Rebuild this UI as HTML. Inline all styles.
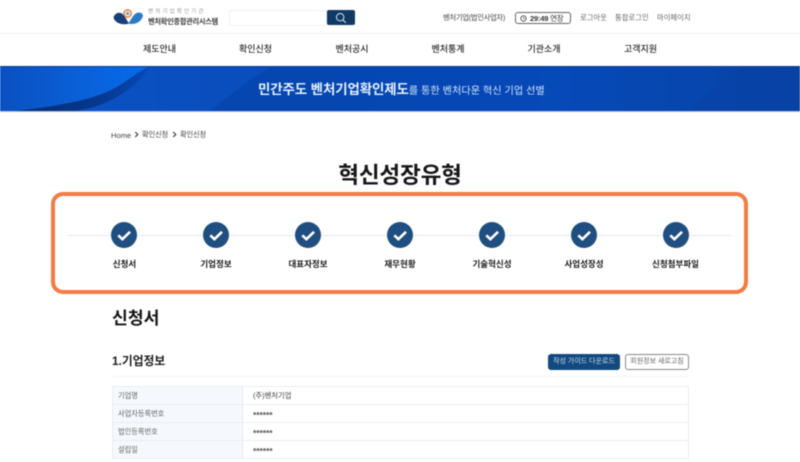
<!DOCTYPE html>
<html lang="ko"><head><meta charset="utf-8"><title>혁신성장유형</title>
<style>
*{box-sizing:border-box;margin:0;padding:0}
html,body{width:800px;height:462px;overflow:hidden;background:#fff}
body{font-family:"Liberation Sans","Noto Sans CJK KR",sans-serif;color:#222;position:relative}
.a{position:absolute;white-space:nowrap;line-height:1}
.c{transform:translateX(-50%)}
#wrap{position:absolute;inset:0;filter:blur(.4px)}
.nav{font-size:9px;font-weight:500;color:#2c2c2c;top:45px}
.top{font-size:7.3px;color:#666;top:14px}
.lab{font-size:8.5px;font-weight:700;color:#1a1a1a;top:260px}
.dot{position:absolute;top:222px;width:26px;height:26px;border-radius:50%;background:#1f4e80}
.dot svg{display:block}
.row{position:absolute;left:112px;width:577px;height:18px;border-bottom:1px solid #ebecf0;border-left:1px solid #ebecf0;border-right:1px solid #ebecf0}
.row i{position:absolute;left:0;top:0;width:130px;height:100%;background:#f5f8fc;border-right:1px solid #e6e9ee}
.row b{position:absolute;left:5px;top:5px;font-weight:400;font-size:7.2px;color:#666;line-height:1;white-space:nowrap}
.row span{position:absolute;left:140px;top:5px;font-size:7.3px;color:#444;line-height:1;white-space:nowrap}
.row span.s{font-size:8.6px;top:6px;font-weight:700;letter-spacing:-.1px;color:#555}
</style></head><body><div id="wrap">

<!-- logo -->
<svg class="a" style="left:112px;top:8px" width="32" height="17" viewBox="0 0 32 17">
<path d="M1.5 9.5C3 5 7 3.5 10.5 6C13 8 14 11 17 15.5C11 17.5 3 15.5 1.5 9.5Z" fill="#16407c"/>
<path d="M31 7.5C30 4 25.5 3.5 22.5 6.5C20 9 19 12 16 15.5C22 17.5 30 14 31 7.5Z" fill="#2a7cc8"/>
<circle cx="15.6" cy="5.5" r="3.6" fill="#fff" stroke="#ee8440" stroke-width="1.7"/>
<circle cx="15.6" cy="5.5" r="1.6" fill="#4aa0dc"/>
</svg>
<div class="a" style="left:148px;top:9.5px;font-size:5.6px;color:#999;letter-spacing:2.05px">벤처기업확인기관</div>
<div class="a" style="left:148px;top:17.5px;font-size:7.2px;font-weight:700;color:#3a3a3a;letter-spacing:-.25px">벤처확인종합관리시스템</div>

<!-- search -->
<div class="a" style="left:229px;top:10px;width:98px;height:16px;border:1px solid #f3f3f5;background:#fff"></div>
<div class="a" style="left:327px;top:10px;width:28px;height:15px;background:#0f3a64;border-radius:2px"></div>
<svg class="a" style="left:335px;top:12px" width="12" height="12" viewBox="0 0 12 12"><circle cx="5.2" cy="5.2" r="3.7" fill="none" stroke="#dfe8f2" stroke-width="1"/><path d="M8 8L10.8 10.8" stroke="#dfe8f2" stroke-width="1"/></svg>

<!-- top right -->
<div class="a top" style="left:443px;color:#444;letter-spacing:-.3px">벤처기업(법인사업자)</div>
<div class="a" style="left:515px;top:12px;width:56px;height:12px;border:1px solid #666;border-radius:3px"></div>
<svg class="a" style="left:520px;top:15px" width="7" height="7" viewBox="0 0 7 7"><circle cx="3.5" cy="3.5" r="2.7" fill="none" stroke="#444" stroke-width=".8"/><path d="M3.5 2V3.6H5" fill="none" stroke="#444" stroke-width=".6"/></svg>
<div class="a" style="left:530px;top:14.5px;font-size:7.5px;font-weight:700;color:#333;letter-spacing:-.2px">29:49 <span style="font-weight:400">연장</span></div>
<div class="a top" style="left:580px">로그아웃</div>
<div class="a top" style="left:615px">통합로그인</div>
<div class="a top" style="left:657px">마이페이지</div>

<div class="a" style="left:0;top:33px;width:800px;height:1px;background:#efeff1"></div>

<!-- nav -->
<div class="a nav c" style="left:159.5px">제도안내</div>
<div class="a nav c" style="left:255.5px">확인신청</div>
<div class="a nav c" style="left:352px">벤처공시</div>
<div class="a nav c" style="left:448px">벤처통계</div>
<div class="a nav c" style="left:544px">기관소개</div>
<div class="a nav c" style="left:640.5px">고객지원</div>

<!-- banner -->
<svg class="a" style="left:0;top:66px" width="800" height="46" viewBox="0 0 800 46" preserveAspectRatio="none">
<defs>
<linearGradient id="g1" x1="0" x2="1" y1="0" y2="0"><stop offset="0" stop-color="#0548b2"/><stop offset=".35" stop-color="#0546b0"/><stop offset=".7" stop-color="#0649b8"/><stop offset="1" stop-color="#0844a6"/></linearGradient>
<linearGradient id="g2" x1="0" x2="1" y1="0" y2="0"><stop offset="0" stop-color="#0a50c0"/><stop offset=".5" stop-color="#0a5fd6"/><stop offset="1" stop-color="#066cec"/></linearGradient>
<linearGradient id="g3" x1="0" x2="1" y1="0" y2="0"><stop offset="0" stop-color="#052c70"/><stop offset=".65" stop-color="#06388e"/><stop offset="1" stop-color="#0749b8"/></linearGradient>
<linearGradient id="g4" x1="0" x2="1" y1="0" y2="0"><stop offset="0" stop-color="#0a52c4"/><stop offset="1" stop-color="#0a4dbc"/></linearGradient>
</defs>
<rect width="800" height="46" fill="url(#g1)"/>
<path d="M150 0C125 15 110 46 60 46H208C232 28 250 12 273 0Z" fill="url(#g4)"/>
<path d="M4 46C60 40 96 34 120 19C132 11 140 5 150 0C135 25 100 46 60 46Z" fill="url(#g3)"/>
<path d="M0 46H6C60 40 96 34 120 19C132 11 140 5 150 0H0Z" fill="url(#g2)"/>
<path d="M690 46L740 0H800V46Z" fill="#0a3fa2" opacity=".35"/>
<rect y="0" width="800" height="1" fill="#0a3a94"/>
<rect y="45" width="800" height="1" fill="#a8c2e4"/>
</svg>
<div class="a" style="left:258px;top:83px;font-size:13.45px;font-weight:700;color:#e6f1ff;letter-spacing:-.1px">민간주도 벤처기업확인제도<span style="font-size:10.2px;font-weight:400;letter-spacing:0;color:#cfe2fb">를 통한 벤처다운 혁신 기업 선별</span></div>

<!-- breadcrumb -->
<div class="a" style="left:111px;top:131.5px;font-size:7.6px;color:#444">Home</div>
<svg class="a" style="left:134px;top:131px" width="5" height="7" viewBox="0 0 5 7"><path d="M1.2 1L3.8 3.5L1.2 6" fill="none" stroke="#333" stroke-width="1.1"/></svg>
<div class="a" style="left:142px;top:131px;font-size:7.3px;color:#444;letter-spacing:-.2px">확인신청</div>
<svg class="a" style="left:172px;top:131px" width="5" height="7" viewBox="0 0 5 7"><path d="M1.2 1L3.8 3.5L1.2 6" fill="none" stroke="#333" stroke-width="1.1"/></svg>
<div class="a" style="left:180px;top:131px;font-size:7.3px;color:#444;letter-spacing:-.2px">확인신청</div>

<!-- title -->
<div class="a c" style="left:400px;top:165px;font-size:22.6px;font-weight:700;color:#161616;letter-spacing:-.2px">혁신성장유형</div>

<!-- steps -->
<div class="a" style="left:51px;top:192px;width:697px;height:102px;border:4.5px solid #f47b45;border-radius:12px"></div>
<div class="a" style="left:67px;top:235px;width:665px;height:1px;background:#e9eaf2"></div>
<div class="dot" style="left:111px"><svg width="26" height="26" viewBox="0 0 26 26"><path d="M7.3 13.3L11.4 17.2L19 9.8" fill="none" stroke="#fff" stroke-width="2.6"/></svg></div>
<div class="dot" style="left:203px"><svg width="26" height="26" viewBox="0 0 26 26"><path d="M7.3 13.3L11.4 17.2L19 9.8" fill="none" stroke="#fff" stroke-width="2.6"/></svg></div>
<div class="dot" style="left:295px"><svg width="26" height="26" viewBox="0 0 26 26"><path d="M7.3 13.3L11.4 17.2L19 9.8" fill="none" stroke="#fff" stroke-width="2.6"/></svg></div>
<div class="dot" style="left:387px"><svg width="26" height="26" viewBox="0 0 26 26"><path d="M7.3 13.3L11.4 17.2L19 9.8" fill="none" stroke="#fff" stroke-width="2.6"/></svg></div>
<div class="dot" style="left:479px"><svg width="26" height="26" viewBox="0 0 26 26"><path d="M7.3 13.3L11.4 17.2L19 9.8" fill="none" stroke="#fff" stroke-width="2.6"/></svg></div>
<div class="dot" style="left:571px"><svg width="26" height="26" viewBox="0 0 26 26"><path d="M7.3 13.3L11.4 17.2L19 9.8" fill="none" stroke="#fff" stroke-width="2.6"/></svg></div>
<div class="dot" style="left:663px"><svg width="26" height="26" viewBox="0 0 26 26"><path d="M7.3 13.3L11.4 17.2L19 9.8" fill="none" stroke="#fff" stroke-width="2.6"/></svg></div>
<div class="a lab c" style="left:124.5px">신청서</div>
<div class="a lab c" style="left:216px">기업정보</div>
<div class="a lab c" style="left:308px">대표자정보</div>
<div class="a lab c" style="left:400px">재무현황</div>
<div class="a lab c" style="left:492px">기술혁신성</div>
<div class="a lab c" style="left:584px">사업성장성</div>
<div class="a lab c" style="left:675.5px">신청첨부파일</div>

<!-- section -->
<div class="a" style="left:112px;top:310px;font-size:17.2px;font-weight:700;color:#161616">신청서</div>
<div class="a" style="left:112px;top:355.5px;font-size:11.8px;font-weight:700;color:#1c1c1c">1.기업정보</div>
<div class="a" style="left:548px;top:354px;width:72px;height:16px;background:#124a80;border-radius:3px;color:#cfdeec;font-size:7px;text-align:center;line-height:16px;font-weight:400">작성 가이드 다운로드</div>
<div class="a" style="left:625px;top:354px;width:64px;height:16px;border:1px solid #8a8a8a;border-radius:3px;color:#666;font-size:7px;text-align:center;line-height:14px">회원정보 새로고침</div>
<div class="a" style="left:112px;top:376px;width:577px;height:1px;background:#f3f3f5"></div>

<!-- table -->
<div class="a" style="left:112px;top:386px;width:577px;height:1px;background:#ebecf0"></div>
<div class="row" style="top:387px"><i></i><b>기업명</b><span>(주)벤처기업</span></div>
<div class="row" style="top:405px"><i></i><b>사업자등록번호</b><span class="s">******</span></div>
<div class="row" style="top:423px"><i></i><b>법인등록번호</b><span class="s">******</span></div>
<div class="row" style="top:441px"><i></i><b>설립일</b><span class="s">******</span></div>

</div></body></html>
